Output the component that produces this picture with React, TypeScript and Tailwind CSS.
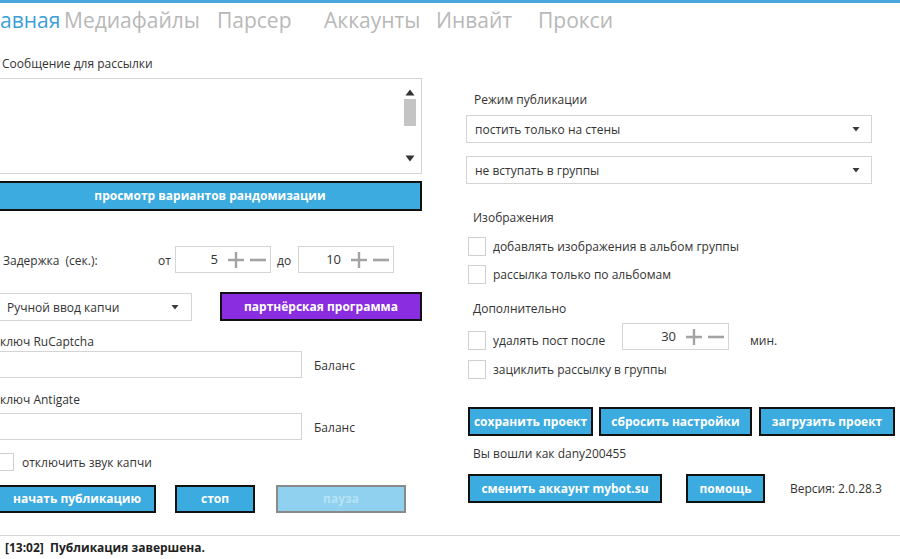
import React from 'react';

const font = { fontFamily: '"Open Sans", "Noto Sans", "DejaVu Sans", sans-serif' };

function Plus() {
  return (
    <svg width="18" height="18" viewBox="0 0 18 18">
      <path d="M9 1v16M1 9h16" stroke="#a3a3a3" strokeWidth="2.4" />
    </svg>
  );
}

function Minus() {
  return (
    <svg width="18" height="18" viewBox="0 0 18 18">
      <path d="M1 9h16" stroke="#a3a3a3" strokeWidth="2.6" />
    </svg>
  );
}

function Arrow() {
  return (
    <svg width="8" height="6" viewBox="0 0 8 6">
      <path d="M0.5 1h7L4 5.5z" fill="#3a3a3a" />
    </svg>
  );
}

function Spin({ value, w }: { value: string; w: string }) {
  return (
    <div className={`${w} h-[27px] border border-[#d4d4d4] flex items-center justify-end pr-[3px] bg-white`}>
      <span className="text-[13px] text-[#333] mr-[9px]">{value}</span>
      <Plus />
      <span className="w-[4px]" />
      <Minus />
    </div>
  );
}

function Select({ text, w, extra = '' }: { text: string; w: string; extra?: string }) {
  return (
    <div className={`${w} h-[28px] border border-[#d4d4d4] flex items-center justify-between pl-[8px] pr-[11px] bg-white ${extra}`}>
      <span className="text-[12px] text-[#333] pt-[1px]">{text}</span>
      <Arrow />
    </div>
  );
}

function Check({ label, extra = '' }: { label: string; extra?: string }) {
  return (
    <div className={`flex items-center gap-[7px] ${extra}`}>
      <div className="w-[18px] h-[19px] border border-[#d0d0d0] bg-white" />
      <span className="text-[12px] text-[#333]">{label}</span>
    </div>
  );
}

function Btn({ text, w, h = 'h-[28px]', extra = '' }: { text: string; w: string; h?: string; extra?: string }) {
  return (
    <div className={`${w} ${h} bg-[#3babe0] border-2 border-[#111] flex items-center justify-center text-white font-bold text-[12px] ${extra}`}>
      {text}
    </div>
  );
}

export default function App() {
  return (
    <div className="w-[900px] h-[559px] overflow-hidden bg-white relative" style={font}>
      <div className="h-[3px] bg-[#4aa7dc]" />

      <div className="h-[34px] flex items-center text-[21px] text-[#b8b8b8] leading-none">
        <div className="w-[64px] text-[#3d9fd8]">авная</div>
        <div className="w-[153px]">Медиафайлы</div>
        <div className="w-[107px]">Парсер</div>
        <div className="w-[112px]">Аккаунты</div>
        <div className="w-[102px]">Инвайт</div>
        <div>Прокси</div>
      </div>

      <div className="flex h-[498px]">
        {/* left column */}
        <div className="w-[424px] -ml-[2px] flex flex-col text-[12px] text-[#333]">
          <div className="mt-[19px] h-[16px] leading-[16px] pl-[4px]">Сообщение для рассылки</div>
          <div className="mt-[6px] h-[96px] border border-[#d4d4d4] relative">
            <div className="absolute right-[5px] top-[10px] flex flex-col items-center w-[12px]">
              <svg width="10" height="7" viewBox="0 0 10 7"><path d="M5 0.5L9.5 6.5h-9z" fill="#333" /></svg>
              <div className="w-[12px] h-[27px] bg-[#c4c4c4] mt-[3px]" />
              <svg className="mt-[29px]" width="10" height="7" viewBox="0 0 10 7"><path d="M0.5 0.5h9L5 6.5z" fill="#333" /></svg>
            </div>
          </div>
          <Btn text="просмотр вариантов рандомизации" w="w-[424px]" h="h-[30px]" extra="mt-[7px]" />

          <div className="mt-[35px] h-[27px] flex items-center">
            <span className="pl-[5px] w-[160px] pt-[3px]">Задержка&nbsp;&nbsp;(сек.):</span>
            <span className="w-[17px] pt-[3px]">от</span>
            <Spin value="5" w="w-[96px]" />
            <span className="ml-[6px] w-[21px] pt-[3px]">до</span>
            <Spin value="10" w="w-[96px]" />
          </div>

          <div className="mt-[19px] h-[29px] flex items-end">
            <Select text="Ручной ввод капчи" w="w-[194px]" extra="h-[27px] pl-[4px] pr-[12px]" />
            <div className="ml-[28px] w-[202px] h-[29px] bg-[#8a2de0] border-2 border-[#111] flex items-center justify-center text-white font-bold text-[12px]">
              партнёрская программа
            </div>
          </div>

          <div className="mt-[13px] h-[16px] leading-[16px] pl-[2px]">ключ RuCaptcha</div>
          <div className="mt-[1px] h-[27px] flex items-center">
            <div className="w-[304px] h-[27px] border border-[#d4d4d4]" />
            <span className="ml-[12px] pt-[2px]">Баланс</span>
          </div>

          <div className="mt-[14px] h-[16px] leading-[16px] pl-[2px]">ключ Antigate</div>
          <div className="mt-[5px] h-[27px] flex items-center">
            <div className="w-[304px] h-[27px] border border-[#d4d4d4]" />
            <span className="ml-[12px] pt-[2px]">Баланс</span>
          </div>

          <div className="mt-[13px] h-[18px] flex items-center -ml-[4px]">
            <div className="w-[20px] h-[18px] border border-[#d0d0d0]" />
            <span className="ml-[8px] pt-[1px]">отключить звук капчи</span>
          </div>

          <div className="mt-[14px] h-[28px] flex items-center">
            <Btn text="начать публикацию" w="w-[158px]" />
            <Btn text="стоп" w="w-[80px]" extra="ml-[19px]" />
            <div className="ml-[21px] w-[130px] h-[28px] bg-[#8fd1ef] border-2 border-[#8a8a8a] flex items-center justify-center text-[#b6e2f5] font-bold text-[12px]">
              пауза
            </div>
          </div>
        </div>

        {/* right column */}
        <div className="ml-[44px] w-[430px] flex flex-col text-[12px] text-[#333]">
          <div className="mt-[55px] h-[16px] leading-[16px] pl-[8px]">Режим публикации</div>
          <Select text="постить только на стены" w="w-[406px]" extra="mt-[7px]" />
          <Select text="не вступать в группы" w="w-[406px]" extra="mt-[13px]" />

          <div className="mt-[26px] h-[16px] leading-[16px] pl-[7px]">Изображения</div>
          <Check label="добавлять изображения в альбом группы" extra="mt-[11px] ml-[2px]" />
          <Check label="рассылка только по альбомам" extra="mt-[9px] ml-[2px]" />

          <div className="mt-[17px] h-[16px] leading-[16px] pl-[7px]">Дополнительно</div>
          <div className="mt-[6px] h-[27px] flex items-end ml-[2px]">
            <div className="w-[18px] h-[19px] border border-[#d0d0d0]" />
            <span className="ml-[7px] w-[129px] leading-[16px] pb-[1px]">удалять пост после</span>
            <Spin value="30" w="w-[107px]" />
            <span className="ml-[21px] leading-[16px] pb-[1px]">мин.</span>
          </div>
          <Check label="зациклить рассылку в группы" extra="mt-[10px] ml-[2px]" />

          <div className="mt-[28px] h-[29px] flex items-center ml-[2px]">
            <Btn text="сохранить проект" w="w-[125px]" h="h-[29px]" />
            <Btn text="сбросить настройки" w="w-[153px]" h="h-[29px]" extra="ml-[6px]" />
            <Btn text="загрузить проект" w="w-[136px]" h="h-[29px]" extra="ml-[7px]" />
          </div>
          <div className="mt-[10px] h-[16px] leading-[16px] pl-[7px]">Вы вошли как dany200455</div>
          <div className="mt-[12px] h-[29px] flex items-center ml-[2px]">
            <Btn text="сменить аккаунт mybot.su" w="w-[194px]" h="h-[29px]" />
            <Btn text="помощь" w="w-[79px]" h="h-[29px]" extra="ml-[24px]" />
            <span className="ml-[25px]">Версия: 2.0.28.3</span>
          </div>
        </div>
      </div>

      <div className="border-t border-[#d8d8d8] h-[24px] flex items-center pl-[5px] text-[12px] font-bold text-[#222]">
        [13:02]&nbsp;&nbsp;Публикация завершена.
      </div>
    </div>
  );
}
